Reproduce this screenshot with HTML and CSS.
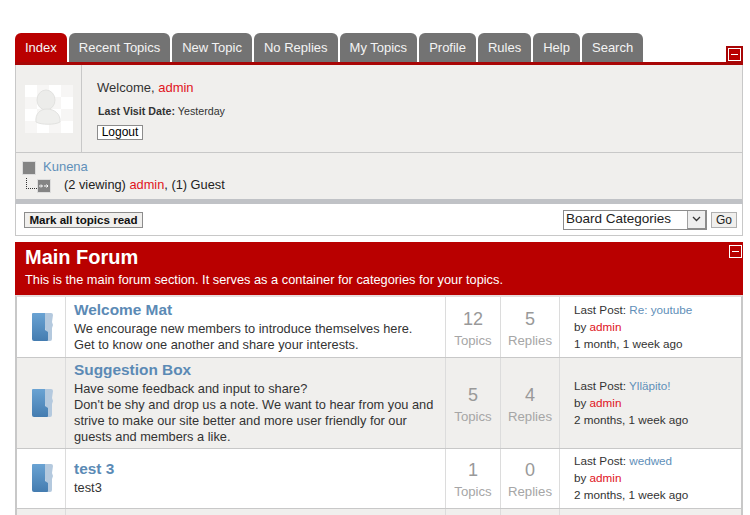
FILE: index.html
```html
<!DOCTYPE html>
<html lang="en">
<head>
  <meta charset="UTF-8"/>
  <title>Forum</title>
  <link rel="stylesheet" href="styles.css">
</head>
<body>
  <div class="container">
    <!-- TABS -->
    <div class="tabs">
      <a class="tab active">Index</a>
      <a class="tab">Recent Topics</a>
      <a class="tab">New Topic</a>
      <a class="tab">No Replies</a>
      <a class="tab">My Topics</a>
      <a class="tab">Profile</a>
      <a class="tab">Rules</a>
      <a class="tab">Help</a>
      <a class="tab">Search</a>
      <span class="collapse tabs-collapse"></span>
    </div>

    <!-- PROFILE BOX -->
    <div class="profile">
      <div class="avatar-col">
        <svg class="avatar" width="48" height="48" viewBox="0 0 48 48">
          <rect width="48" height="48" fill="#f7f6f5"/>
          <path d="M0 0h12v12H0zM24 0h12v12H24zM12 12h12v12H12zM36 12h12v12H36zM0 24h12v12H0zM24 24h12v12H24zM12 36h12v12H12zM36 36h12v12H36z" fill="#fff"/>
          <ellipse cx="21" cy="15" rx="9" ry="10" fill="#ececea" stroke="#e2e2e0"/>
          <path d="M11 37c-1-8 4-13 11-13s14 5 13 13c-5 3-19 3-24 0z" fill="#efefed" stroke="#e2e2e0"/>
        </svg>
      </div>
      <div class="profile-text">
        <div class="welcome">Welcome, <span class="user">admin</span></div>
        <div class="last-visit"><b>Last Visit Date:</b> Yesterday</div>
        <button class="logout">Logout</button>
      </div>
    </div>

    <!-- WHO IS VIEWING -->
    <div class="pathway">
      <div class="path-root"><span class="path-square"></span><a class="link">Kunena</a></div>
      <div class="path-sub">
        <span class="tree-line"></span>
        <span class="path-arrow">
          <svg width="10" height="8" viewBox="0 0 10 8"><path d="M0 4h3M2 2.500l1.500 1.500L2 5.500M5 4h4M7.500 2.500L9 4 7.500 5.500" fill="none" stroke="#fff"/></svg>
        </span>
        <span class="viewing">(2 viewing) <span class="user">admin</span>, (1) Guest</span>
      </div>
    </div>

    <!-- ACTIONS -->
    <div class="actions">
      <button class="mark-read">Mark all topics read</button>
      <div class="jump">
        <span class="select-box"><span class="select-label">Board Categories</span><span class="select-arrow"><svg width="9" height="6" viewBox="0 0 9 6"><path d="M1 1l3.500 3.500L8 1" fill="none" stroke="#333" stroke-width="1.300"/></svg></span></span>
        <button class="go">Go</button>
      </div>
    </div>

    <!-- SECTION HEADER -->
    <div class="section-head">
      <h1>Main Forum</h1>
      <p>This is the main forum section. It serves as a container for categories for your topics.</p>
      <span class="collapse head-collapse"></span>
    </div>

    <!-- FORUM ROWS -->
    <div class="forums">
      <div class="row first">
        <div class="cell-icon">
          <svg width="21" height="29" viewBox="0 0 21 29"><use href="#folder"/></svg>
        </div>
        <div class="cell-main">
          <a class="forum-title">Welcome Mat</a>
          <div class="forum-desc">We encourage new members to introduce themselves here.<br>Get to know one another and share your interests.</div>
        </div>
        <div class="cell-count"><span class="num">12</span>Topics</div>
        <div class="cell-count"><span class="num">5</span>Replies</div>
        <div class="cell-last">
          <div>Last Post: <a class="link">Re: youtube</a></div>
          <div>by <span class="user">admin</span></div>
          <div>1 month, 1 week ago</div>
        </div>
      </div>

      <div class="row alt tall">
        <div class="cell-icon">
          <svg width="21" height="29" viewBox="0 0 21 29"><use href="#folder"/></svg>
        </div>
        <div class="cell-main">
          <a class="forum-title">Suggestion Box</a>
          <div class="forum-desc">Have some feedback and input to share?<br>Don't be shy and drop us a note. We want to hear from you and strive to make our site better and more user friendly for our guests and members a like.</div>
        </div>
        <div class="cell-count"><span class="num">5</span>Topics</div>
        <div class="cell-count"><span class="num">4</span>Replies</div>
        <div class="cell-last">
          <div>Last Post: <a class="link">Ylläpito!</a></div>
          <div>by <span class="user">admin</span></div>
          <div>2 months, 1 week ago</div>
        </div>
      </div>

      <div class="row">
        <div class="cell-icon">
          <svg width="21" height="29" viewBox="0 0 21 29"><use href="#folder"/></svg>
        </div>
        <div class="cell-main">
          <a class="forum-title">test 3</a>
          <div class="forum-desc">test3</div>
        </div>
        <div class="cell-count"><span class="num">1</span>Topics</div>
        <div class="cell-count"><span class="num">0</span>Replies</div>
        <div class="cell-last">
          <div>Last Post: <a class="link">wedwed</a></div>
          <div>by <span class="user">admin</span></div>
          <div>2 months, 1 week ago</div>
        </div>
      </div>

      <div class="row alt stub">
        <div></div><div></div><div></div><div></div><div></div>
      </div>
    </div>
  </div>

  <svg class="defs" width="0" height="0">
    <defs>
      <linearGradient id="folder-front" x1="0" y1="0" x2="0" y2="1">
        <stop offset="0" stop-color="#6aa3d3"/>
        <stop offset="1" stop-color="#447cb0"/>
      </linearGradient>
      <symbol id="folder" viewBox="0 0 21 29">
        <path d="M12 0h7q2 0 2 2l-1 7 1 3-1 3v11q0 2-2 2h-4z" fill="#b4c9de"/>
        <path d="M1 0h12v17l3 2v8q0 1-1 1H2q-2 0-2-2V1q0-1 1-1z" fill="url(#folder-front)"/>
      </symbol>
    </defs>
  </svg>
</body>
</html>
```

FILE: styles.css
```css
html, body {
  margin: 0;
  padding: 0;
  height: 515px;
  overflow: hidden;
  background: #fff;
}
body {
  font-family: "Liberation Sans", Arial, sans-serif;
  font-size: 12px;
  color: #333;
}
.container {
  width: 728px;
  margin-left: 15px;
  padding-top: 33px;
}
.defs {
  position: absolute;
}
a {
  text-decoration: none;
}
.link {
  color: #5f8fb9;
}
.user {
  color: #e0141c;
}
/* TABS */
.tabs {
  display: flex;
  gap: 2px;
  height: 29px;
  border-bottom: 3px solid #a80606;
  position: relative;
}
.tab {
  height: 29px;
  line-height: 29px;
  padding: 0 10px;
  font-size: 13px;
  color: #f4f4f4;
  background: #737373;
  border-radius: 6px 6px 0 0;
}
.tab.active {
  background: #b90000;
}
.collapse {
  position: absolute;
  box-sizing: border-box;
  width: 13px;
  height: 13px;
  border: 1px solid #fff;
}
.collapse::after {
  content: "";
  position: absolute;
  left: 2px;
  right: 2px;
  top: 5px;
  height: 1px;
  background: #fff;
}
.tabs-collapse {
  right: 2px;
  top: 15px;
  background: #b90000;
  box-shadow: 0 0 0 2px #a80606;
}
/* PROFILE */
.profile {
  display: flex;
  height: 87px;
  background: #f0efed;
  border-left: 1px solid #c8c8c8;
  border-right: 1px solid #c8c8c8;
  border-bottom: 1px solid #c8c8c8;
}
.avatar-col {
  width: 66px;
  flex: none;
  border-right: 1px solid #c8c8c8;
  padding: 20px 0 0 9px;
  box-sizing: border-box;
}
.avatar {
  display: block;
}
.profile-text {
  padding: 15px 0 0 15px;
}
.welcome {
  font-size: 13px;
  line-height: 16px;
}
.last-visit {
  font-size: 10.7px;
  line-height: 14px;
  margin: 8px 0 0 1px;
}
.logout {
  display: block;
  margin-top: 7px;
  width: 46px;
  height: 15px;
  padding: 0;
  font: 12px/13px "Liberation Sans", Arial, sans-serif;
  color: #000;
  background: #fff;
  border: 1px solid #8c8c8c;
}
/* PATHWAY */
.pathway {
  height: 51px;
  box-sizing: border-box;
  padding: 5px 0 0 6px;
  background: #f0efed;
  border-left: 1px solid #c8c8c8;
  border-right: 1px solid #c8c8c8;
  border-bottom: 5px solid #c0c2c6;
  font-size: 12.8px;
}
.path-root {
  display: flex;
  align-items: flex-start;
  height: 16px;
  line-height: 16px;
}
.path-root .link {
  margin: 1px 0 0 7px;
  font-size: 13px;
}
.path-square {
  box-sizing: border-box;
  width: 14px;
  height: 14px;
  margin-top: 3px;
  background: #848484;
  border: 1px solid #dcdcdc;
}
.path-sub {
  display: flex;
  align-items: center;
  height: 20px;
  padding-left: 4px;
}
.tree-line {
  width: 10px;
  height: 10px;
  margin-top: -2px;
  border-left: 1px dotted #333;
  border-bottom: 1px dotted #333;
}
.path-arrow {
  display: flex;
  align-items: center;
  justify-content: center;
  box-sizing: border-box;
  width: 14px;
  height: 14px;
  margin-top: 4px;
  background: #848484;
  border: 1px solid #dcdcdc;
}
.viewing {
  margin-left: 13px;
  color: #222;
}
/* ACTIONS */
.actions {
  display: flex;
  justify-content: space-between;
  align-items: center;
  height: 32px;
  box-sizing: border-box;
  padding: 0 5px 0 8px;
  border-left: 1px solid #c8c8c8;
  border-right: 1px solid #c8c8c8;
  border-bottom: 1px solid #c8c8c8;
}
.mark-read {
  height: 16px;
  width: 119px;
  padding: 0;
  font: bold 11.6px/14px "Liberation Sans", Arial, sans-serif;
  color: #111;
  background: #f0efed;
  border: 1px solid #8c8c8c;
}
.jump {
  display: flex;
  align-items: center;
  gap: 4px;
}
.select-box {
  display: flex;
  justify-content: space-between;
  align-items: center;
  box-sizing: border-box;
  width: 144px;
  height: 20px;
  padding-left: 2px;
  font-size: 13.5px;
  color: #222;
  background: #fff;
  border: 1px solid #8c8c8c;
}
.select-label {
  margin-top: -2px;
}
.select-arrow {
  display: flex;
  align-items: center;
  justify-content: center;
  box-sizing: border-box;
  width: 19px;
  height: 18px;
  background: #eeeeee;
  border-left: 1px solid #a0a0a0;
  border-right: 1px solid #8c8c8c;
  border-bottom: 1px solid #8c8c8c;
}
.go {
  width: 26px;
  height: 16px;
  padding: 0;
  font: 12px/14px "Liberation Sans", Arial, sans-serif;
  color: #222;
  background: #f0efed;
  border: 1px solid #b0b0b0;
}
/* SECTION HEADER */
.section-head {
  position: relative;
  height: 53px;
  margin-top: 6px;
  box-sizing: border-box;
  padding: 4px 0 0 10px;
  background: #b90000;
  color: #fff;
}
.section-head h1 {
  margin: 0;
  font-size: 20px;
  line-height: 23px;
  font-weight: bold;
}
.section-head p {
  margin: 3px 0 0;
  font-size: 12.8px;
  line-height: 16px;
}
.head-collapse {
  right: 1px;
  top: 3px;
}
/* FORUM ROWS */
.forums {
  border-top: 2px solid #e6dcdc;
  border-left: 2px solid #c8c8c8;
  border-right: 2px solid #c8c8c8;
}
.row {
  display: grid;
  grid-template-columns: 49px 380px 55px 59px 1fr;
  border-bottom: 1px solid #c8c8c8;
  min-height: 60px;
  box-sizing: border-box;
  background: #fff;
}
.row.first {
  min-height: 61px;
}
.row.tall {
  min-height: 91px;
}
.row > div {
  border-right: 1px solid #dcdcdc;
  box-sizing: border-box;
}
.row > div:last-child {
  border-right: 0;
}
.row.alt {
  background: #f0efed;
}
.cell-icon {
  display: flex;
  align-items: center;
  justify-content: center;
  padding-left: 3px;
}
.cell-main {
  display: flex;
  flex-direction: column;
  justify-content: center;
  padding: 0 8px 1px;
}
.forum-title {
  display: block;
  font-size: 15.4px;
  line-height: 18px;
  font-weight: bold;
  color: #5b8ab5;
}
.forum-desc {
  font-size: 12.8px;
  line-height: 16px;
  color: #333;
  margin-top: 2px;
}
.cell-count {
  display: flex;
  flex-direction: column;
  align-items: center;
  justify-content: center;
  padding-top: 2px;
  font-size: 13.2px;
  line-height: 19px;
  color: #a6a6a6;
}
.cell-count .num {
  font-size: 18px;
  line-height: 24px;
  color: #999;
}
.cell-last {
  display: flex;
  flex-direction: column;
  justify-content: center;
  padding: 0 0 2px 14px;
  font-size: 11.7px;
  line-height: 17px;
}
```
